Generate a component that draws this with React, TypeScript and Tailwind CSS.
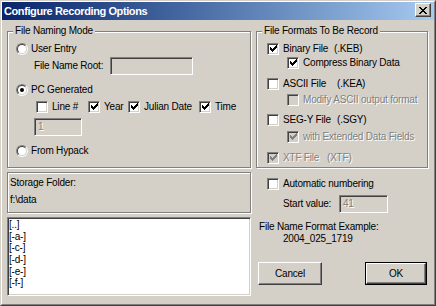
import { ReactNode } from "react";

const cx = (...c: (string | false | undefined)[]) => c.filter(Boolean).join(" ");

// classic win32 edges
const etched = "border border-[#808080] shadow-[inset_1px_1px_0_#fff,1px_1px_0_#fff]";
const sunken =
    "border border-t-[#808080] border-l-[#808080] border-r-white border-b-white shadow-[inset_1px_1px_0_#404040,inset_-1px_-1px_0_#d4d0c8]";
const raised =
    "border border-t-white border-l-white border-r-[#404040] border-b-[#404040] shadow-[inset_-1px_-1px_0_#808080]";
const grayText = "text-[#808080] [text-shadow:1px_1px_0_#fff]";

const CheckBox = ({ checked = false, disabled = false }: { checked?: boolean; disabled?: boolean }) => (
    <span
        className={cx(
            "flex h-[12px] w-[12px] shrink-0 items-center justify-center",
            sunken,
            disabled ? "bg-[#d4d0c8]" : "bg-white"
        )}
    >
        {checked && (
            <svg width="7" height="7" viewBox="0 0 7 7" shapeRendering="crispEdges">
                <path
                    d="M6 0h1v1H6z M5 1h2v1H5z M0 2h1v1H0z M4 2h3v1H4z M0 3h2v1H0z M3 3h3v1H3z M0 4h5v1H0z M1 5h3v1H1z M2 6h1v1H2z"
                    fill={disabled ? "#808080" : "#000"}
                />
            </svg>
        )}
    </span>
);

const Radio = ({ checked = false }: { checked?: boolean }) => (
    <span className="flex h-[12px] w-[12px] shrink-0 items-center justify-center rounded-full border border-t-[#808080] border-l-[#808080] border-r-white border-b-white">
        <span className="flex h-[10px] w-[10px] items-center justify-center rounded-full border border-t-[#404040] border-l-[#404040] border-r-[#d4d0c8] border-b-[#d4d0c8] bg-white">
            {checked && <span className="h-[4px] w-[4px] rounded-full bg-black" />}
        </span>
    </span>
);

const TextBox = ({ value = "", className }: { value?: string; className?: string }) => (
    <div className={cx("flex items-center bg-[#d4d0c8] pl-[3px]", sunken, className)}>
        <span className={grayText}>{value}</span>
    </div>
);

const GroupBox = ({ title, className, children }: { title: string; className?: string; children: ReactNode }) => (
    <div className={cx("relative", etched, className)}>
        <span className="absolute left-[5px] top-[-7px] bg-[#d4d0c8] px-[2px] leading-[12px]">{title}</span>
        {children}
    </div>
);

const Row = ({ className, children }: { className?: string; children: ReactNode }) => (
    <div className={cx("flex h-[13px] items-center whitespace-nowrap", className)}>{children}</div>
);

export default function App() {
    return (
        <div className="h-[306px] w-[436px] border border-t-[#d4d0c8] border-l-[#d4d0c8] border-r-[#404040] border-b-[#404040] bg-[#d4d0c8] font-['Liberation_Sans',Arial,sans-serif] text-[10px] leading-[12px] tracking-[-0.2px] text-black">
            <div className="flex h-full flex-col border border-t-white border-l-white border-r-[#808080] border-b-[#808080]">
                {/* Title bar */}
                <div className="flex h-[18px] shrink-0 items-start justify-between bg-linear-to-r from-[#0a246a] to-[#a6caf0] pl-[2px] pr-[3px]">
                    <span className="self-center text-[11px] font-bold tracking-[-0.4px] text-white">
                        Configure Recording Options
                    </span>
                    <span className={cx("mt-[1px] flex h-[14px] w-[16px] items-center justify-center bg-[#d4d0c8]", raised)}>
                        <svg width="8" height="7" viewBox="0 0 8 7" shapeRendering="crispEdges">
                            <path
                                d="M0 0h2v1H0z M6 0h2v1H6z M1 1h2v1H1z M5 1h2v1H5z M2 2h4v1H2z M3 3h2v1H3z M2 4h4v1H2z M1 5h2v1H1z M5 5h2v1H5z M0 6h2v1H0z M6 6h2v1H6z"
                                fill="#000"
                            />
                        </svg>
                    </span>
                </div>

                {/* Body */}
                <div className="flex gap-[5px] pl-[5px]">
                    {/* Left column */}
                    <div className="flex w-[244px] flex-col">
                        <GroupBox title="File Naming Mode" className="mt-[11px] h-[137px] pt-[10px] pl-[8px]">
                            <Row className="gap-[3px]">
                                <Radio />
                                <span>User Entry</span>
                            </Row>
                            <div className="mt-[2px] flex h-[18px] items-center pl-[18px]">
                                <span className="w-[76px]">File Name Root:</span>
                                <TextBox className="h-[18px] w-[83px]" />
                            </div>
                            <Row className="mt-[8px] gap-[3px]">
                                <Radio checked />
                                <span>PC Generated</span>
                            </Row>
                            <Row className="mt-[4px] pl-[20px]">
                                <div className="flex w-[52px] items-center gap-[4px]">
                                    <CheckBox />
                                    <span>Line #</span>
                                </div>
                                <div className="flex w-[40px] items-center gap-[4px]">
                                    <CheckBox checked />
                                    <span>Year</span>
                                </div>
                                <div className="flex w-[71px] items-center gap-[4px]">
                                    <CheckBox checked />
                                    <span>Julian Date</span>
                                </div>
                                <div className="flex items-center gap-[4px]">
                                    <CheckBox checked />
                                    <span>Time</span>
                                </div>
                            </Row>
                            <div className="mt-[5px] pl-[18px]">
                                <TextBox value="1" className="h-[18px] w-[48px]" />
                            </div>
                            <Row className="mt-[8px] gap-[3px]">
                                <Radio />
                                <span>From Hypack</span>
                            </Row>
                        </GroupBox>

                        <div className={cx("mt-[4px] h-[41px] pt-[4px] pl-[2px]", etched)}>
                            <div>Storage Folder:</div>
                            <div className="mt-[5px]">f:\data</div>
                        </div>

                        <div className={cx("mt-[4px] h-[79px] bg-white px-[1px] pt-[1px] leading-[11.67px]", sunken)}>
                            {["[..]", "[-a-]", "[-c-]", "[-d-]", "[-e-]", "[-f-]"].map((d) => (
                                <div key={d}>{d}</div>
                            ))}
                        </div>
                    </div>

                    {/* Right column */}
                    <div className="flex w-[172px] flex-col">
                        <GroupBox title="File Formats To Be Record" className="mt-[11px] h-[137px] pt-[10px] pl-[10px]">
                            <Row className="gap-[4px]">
                                <CheckBox checked />
                                <span>Binary File</span>
                                <span className="ml-[2px]">(.KEB)</span>
                            </Row>
                            <Row className="mt-[1px] gap-[4px] pl-[20px]">
                                <CheckBox checked />
                                <span>Compress Binary Data</span>
                            </Row>
                            <Row className="mt-[8px] gap-[4px]">
                                <CheckBox />
                                <span className="w-[50px]">ASCII File</span>
                                <span>(.KEA)</span>
                            </Row>
                            <Row className="mt-[3px] gap-[4px] pl-[20px]">
                                <CheckBox disabled />
                                <span className={grayText}>Modify ASCII output format</span>
                            </Row>
                            <Row className="mt-[7px] gap-[4px]">
                                <CheckBox />
                                <span className="w-[50px]">SEG-Y File</span>
                                <span>(.SGY)</span>
                            </Row>
                            <Row className="mt-[4px] gap-[4px] pl-[20px]">
                                <CheckBox checked disabled />
                                <span className={grayText}>with Extended Data Fields</span>
                            </Row>
                            <Row className="mt-[8px] gap-[4px]">
                                <CheckBox checked disabled />
                                <span className={cx("w-[40px]", grayText)}>XTF File</span>
                                <span className={grayText}>(XTF)</span>
                            </Row>
                        </GroupBox>

                        <Row className="mt-[9px] gap-[4px] pl-[11px]">
                            <CheckBox />
                            <span>Automatic numbering</span>
                        </Row>
                        <div className="mt-[5px] flex h-[18px] items-center pl-[27px]">
                            <span className="w-[56px]">Start value:</span>
                            <TextBox value="41" className="h-[18px] w-[49px]" />
                        </div>
                        <div className="mt-[8px] pl-[3px]">File Name Format Example:</div>
                        <div className="pl-[27px]">2004_025_1719</div>

                        <div className="mt-[17px] flex justify-between pl-[2px] pr-[1px]">
                            <button className={cx("flex h-[23px] w-[64px] items-center justify-center bg-[#d4d0c8]", raised)}>
                                Cancel
                            </button>
                            <div className="h-[23px] w-[62px] border border-black">
                                <button className={cx("flex h-full w-full items-center justify-center bg-[#d4d0c8]", raised)}>
                                    OK
                                </button>
                            </div>
                        </div>
                    </div>
                </div>
            </div>
        </div>
    );
}
